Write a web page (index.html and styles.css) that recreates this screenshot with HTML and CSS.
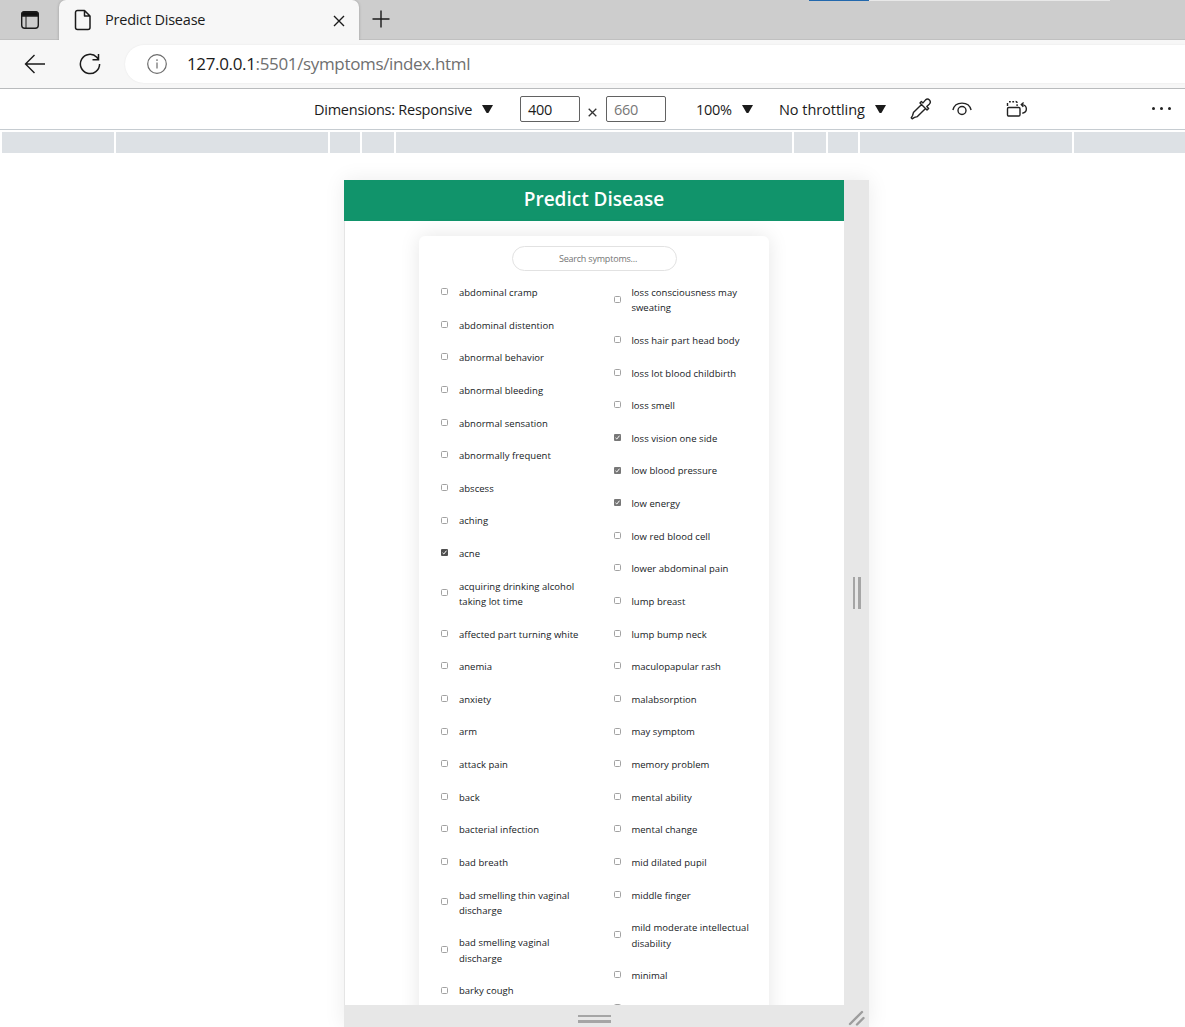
FILE: index.html
```html
<!DOCTYPE html>
<html lang="en">
<head>
<meta charset="utf-8">
<title>Predict Disease</title>
<link rel="stylesheet" href="styles.css">
</head>
<body>
<header class="tabs">
  <svg class="tabs-menu" width="20" height="20" viewBox="0 0 20 20" fill="none" stroke="#1b1b1b" stroke-width="1.4"><rect x="1.7" y="1.7" width="16.6" height="16.6" rx="3"/><path d="M2 3.8Q2 2 4 2h12q2 0 2 1.800V6H2z" fill="#111"/><path d="M6 6v12" stroke-width="1"/></svg>
  <div class="tab">
    <svg width="18" height="22" viewBox="0 0 18 22" fill="none" stroke="#1b1b1b" stroke-width="1.5" stroke-linejoin="round"><path d="M3.500 1.500h7l5.500 5.500v11.500a2 2 0 0 1-2 2H3.500a2 2 0 0 1-2-2v-15a2 2 0 0 1 2-2zM10.500 1.500V7H16"/></svg>
    <span class="tab-title">Predict Disease</span>
    <svg class="tab-close" width="12" height="12" viewBox="0 0 12 12" stroke="#1b1b1b" stroke-width="1.400"><path d="M1 1l10 10M11 1L1 11"/></svg>
  </div>
  <svg class="tab-new" width="18" height="18" viewBox="0 0 18 18" stroke="#1b1b1b" stroke-width="1.400"><path d="M9 .5v17M.5 9h17"/></svg>
  <div class="edge"><i class="edge-blue"></i><i class="edge-light"></i></div>
</header>
<nav class="nav">
  <svg class="back" width="22" height="20" viewBox="0 0 22 20" fill="none" stroke="#1b1b1b" stroke-width="1.400"><path d="M21 10H1.500M10.500 1L1.500 10l9 9"/></svg>
  <svg class="reload" width="22" height="22" viewBox="0 0 22 22" fill="none" stroke="#1b1b1b" stroke-width="1.500"><path d="M20.600 11A9.600 9.600 0 1 1 17.800 4.200L19.500 6.500M19.500 1v5.800h-6"/></svg>
  <div class="address">
    <svg width="20" height="20" viewBox="0 0 20 20" fill="none" stroke="#6c6c6c" stroke-width="1.200"><circle cx="10" cy="10" r="9.300"/><path d="M10 8.500v6M10 5.300v1.700"/></svg>
    <span class="url"><b>127.0.0.1</b>:5501/symptoms/index.html</span>
  </div>
</nav>
<section class="devbar">
  <span class="dimensions">Dimensions: Responsive</span><i class="caret"></i>
  <span class="size">400</span><svg class="times" width="9" height="9" viewBox="0 0 9 9" stroke="#333" stroke-width="1.300"><path d="M.7.700l7.600 7.600M8.300.700L.7 8.300"/></svg><span class="size muted">660</span>
  <span class="scale">100%</span><i class="caret"></i>
  <span class="throttle">No throttling</span><i class="caret"></i>
  <svg class="dropper" width="22" height="22" viewBox="0 0 22 22" fill="none" stroke="#222" stroke-width="1.400" stroke-linejoin="round"><path d="M11.800 6.200L3.400 14.600 2.600 17.500 1.200 19.800 2.200 20.800 4.500 19.400 7.400 18.600 15.800 10.200M10 5l7 7 1.600-1.600-1.800-1.900 2.700-2.600a2.800 2.800 0 0 0-3.900-4L13 4.900l-1.600-1.500z"/></svg>
  <svg class="eye" width="20" height="14" viewBox="0 0 20 14" fill="none" stroke="#222" stroke-width="1.400"><path d="M.9 8C3.200-1.200 16.800-1.200 19.100 8"/><circle cx="10" cy="8.500" r="4"/></svg>
  <svg class="rotate" width="22" height="18" viewBox="0 0 22 18" fill="none" stroke="#222" stroke-width="1.400"><rect x="1.500" y="7.500" width="12.500" height="8.500" rx="1.200"/><path d="M1.500 6V3M3 1.700h1.800M6.300 1.700h1.800M9.600 1.500q1.500 0 1.500 1.500M11.100 4.300V6"/><path d="M16.300 13.200C21.800 12.200 21.800 5.200 15.800 4.600M17.600 2.500L15.300 4.600l2 2.300"/></svg>
  <span class="more"><i></i><i></i><i></i></span>
</section>
<div class="ruler"><i></i><i></i><i></i><i></i><i></i><i></i><i></i><i></i><i></i></div>
<main class="stage">
  <div class="device">
    <div class="screen">
      <h1 class="title">Predict Disease</h1>
      <div class="card">
        <input class="search" type="text" placeholder="Search symptoms...">
        <div class="columns">
          <ul class="list">
            <li><i class="box"></i><span>abdominal cramp</span></li>
            <li><i class="box"></i><span>abdominal distention</span></li>
            <li><i class="box"></i><span>abnormal behavior</span></li>
            <li><i class="box"></i><span>abnormal bleeding</span></li>
            <li><i class="box"></i><span>abnormal sensation</span></li>
            <li><i class="box"></i><span>abnormally frequent</span></li>
            <li><i class="box"></i><span>abscess</span></li>
            <li><i class="box"></i><span>aching</span></li>
            <li><svg class="check dark" width="7" height="7" viewBox="0 0 7 7"><rect width="7" height="7" rx="1"/><path d="M1.500 3.800L2.800 5l2.700-3.300"/></svg><span>acne</span></li>
            <li><i class="box"></i><span>acquiring drinking alcohol<br>taking lot time</span></li>
            <li><i class="box"></i><span>affected part turning white</span></li>
            <li><i class="box"></i><span>anemia</span></li>
            <li><i class="box"></i><span>anxiety</span></li>
            <li><i class="box"></i><span>arm</span></li>
            <li><i class="box"></i><span>attack pain</span></li>
            <li><i class="box"></i><span>back</span></li>
            <li><i class="box"></i><span>bacterial infection</span></li>
            <li><i class="box"></i><span>bad breath</span></li>
            <li><i class="box"></i><span>bad smelling thin vaginal<br>discharge</span></li>
            <li><i class="box"></i><span>bad smelling vaginal<br>discharge</span></li>
            <li><i class="box"></i><span>barky cough</span></li>
          </ul>
          <ul class="list">
            <li><i class="box"></i><span>loss consciousness may<br>sweating</span></li>
            <li><i class="box"></i><span>loss hair part head body</span></li>
            <li><i class="box"></i><span>loss lot blood childbirth</span></li>
            <li><i class="box"></i><span>loss smell</span></li>
            <li><svg class="check" width="7" height="7" viewBox="0 0 7 7"><rect width="7" height="7" rx="1"/><path d="M1.500 3.800L2.800 5l2.700-3.300"/></svg><span>loss vision one side</span></li>
            <li><svg class="check" width="7" height="7" viewBox="0 0 7 7"><rect width="7" height="7" rx="1"/><path d="M1.500 3.800L2.800 5l2.700-3.300"/></svg><span>low blood pressure</span></li>
            <li><svg class="check" width="7" height="7" viewBox="0 0 7 7"><rect width="7" height="7" rx="1"/><path d="M1.500 3.800L2.800 5l2.700-3.300"/></svg><span>low energy</span></li>
            <li><i class="box"></i><span>low red blood cell</span></li>
            <li><i class="box"></i><span>lower abdominal pain</span></li>
            <li><i class="box"></i><span>lump breast</span></li>
            <li><i class="box"></i><span>lump bump neck</span></li>
            <li><i class="box"></i><span>maculopapular rash</span></li>
            <li><i class="box"></i><span>malabsorption</span></li>
            <li><i class="box"></i><span>may symptom</span></li>
            <li><i class="box"></i><span>memory problem</span></li>
            <li><i class="box"></i><span>mental ability</span></li>
            <li><i class="box"></i><span>mental change</span></li>
            <li><i class="box"></i><span>mid dilated pupil</span></li>
            <li><i class="box"></i><span>middle finger</span></li>
            <li><i class="box"></i><span>mild moderate intellectual<br>disability</span></li>
            <li><i class="box"></i><span>minimal</span></li>
            <li><i class="box"></i><span></span></li>
          </ul>
        </div>
      </div>
    </div>
    <div class="grip-right"><i></i><i></i></div>
    <div class="grip-bottom"><div class="bars"><i></i><i></i></div></div>
    <div class="grip-corner"><svg width="18" height="16" viewBox="0 0 18 16" stroke="#9d9d9d" stroke-width="2.400" stroke-linecap="round"><path d="M2 14L14 2M9 14.500L15.500 8"/></svg></div>
  </div>
</main>
</body>
</html>
```

FILE: styles.css
```css
* { box-sizing: border-box; }
body {
  margin: 0;
  height: 1027px;
  overflow: hidden;
  background: #fff;
  color: #1b1b1b;
  font-family: "Open Sans", "Noto Sans", sans-serif;
  display: flex;
  flex-direction: column;
}
svg, i { display: block; flex: none; }
.tabs {
  position: relative;
  height: 40px;
  flex: none;
  display: flex;
  background: #cdcdcd;
  border-bottom: 1px solid #c0c0c0;
}
.tabs-menu { margin: 10px 19px 0 20px; }
.tab {
  width: 300px;
  height: 40px;
  padding-left: 15px;
  display: flex;
  align-items: center;
  background: #f7f7f7;
  border-radius: 7px 7px 0 0;
  box-shadow: 0 0 3px rgba(0, 0, 0, .25);
}
.tab-title { margin: -2px 0 0 13px; font-size: 14.5px; letter-spacing: -.22px; white-space: nowrap; }
.tab-close { margin-left: auto; margin-right: 14px; margin-top: 1px; }
.tab-new { margin: 10px 0 0 13px; }
.edge { position: absolute; left: 809px; top: 0; display: flex; }
.edge i { height: 1px; }
.edge-blue { width: 60px; background: #2268ad; }
.edge-light { width: 241px; background: #e8e8e8; }
.nav {
  position: relative;
  height: 49px;
  flex: none;
  display: flex;
  align-items: center;
  background: #f7f7f7;
  border-bottom: 1px solid #b9bbbd;
}
.back { margin-left: 24px; }
.reload { margin-left: 33px; }
.address {
  flex: 1;
  height: 38px;
  margin-left: 24px;
  padding-left: 22px;
  display: flex;
  align-items: center;
  background: #fff;
  border-radius: 19px 0 0 19px;
  box-shadow: 0 0 2px rgba(0, 0, 0, .08);
}
.url { margin: -2px 0 0 20px; color: #6f6f6f; font-size: 17px; letter-spacing: -.35px; white-space: nowrap; }
.url b { color: #1b1b1b; font-weight: 400; }
.devbar {
  height: 41px;
  flex: none;
  display: flex;
  align-items: center;
  border-bottom: 1px solid #c6ccd1;
  font-size: 14.5px;
  letter-spacing: -.25px;
  white-space: nowrap;
}
.dimensions { width: 168px; margin-left: 314px; }
.caret { width: 11px; height: 8px; background: #1b1b1b; clip-path: polygon(0 0, 100% 0, 58% 100%, 42% 100%); }
.size { width: 60px; height: 26px; border: 1px solid #626262; border-radius: 2px; padding-left: 7px; line-height: 26px; }
.caret + .size { margin-left: 27px; }
.muted { color: #777; }
.times { margin: 7px 9px 0 8px; }
.scale { width: 46px; margin-left: 30px; }
.throttle { width: 96px; margin-left: 26px; letter-spacing: -.05px; }
.dropper { margin-left: 24px; }
.eye { margin-left: 20px; }
.rotate { margin-left: 34px; }
.more { margin: 0 14px 2px auto; display: flex; gap: 5px; }
.more i { width: 3px; height: 3px; border-radius: 50%; background: #222; }
.ruler {
  height: 23px;
  flex: none;
  padding: 2px 0 0 2px;
  display: grid;
  grid-template-columns: 112px 212px 30px 32px 396px 32px 30px 212px 111px;
  column-gap: 2px;
}
.ruler i { background: #dde1e5; }
.stage { flex: 1; padding: 27px 0 0 344px; }
.device {
  width: 525px;
  height: 847px;
  display: grid;
  grid-template-columns: 500px 25px;
  grid-template-rows: 825px 22px;
  background: #e7e7e7;
  box-shadow: 0 0 20px rgba(0, 0, 0, .08);
}
.screen { overflow: hidden; background: linear-gradient(90deg, #e5e5e5 1px, #fff 1px); }
.title {
  height: 41px;
  margin: 0 0 15px;
  background: #11946b;
  color: #fff;
  font-size: 19px;
  font-weight: 600;
  line-height: 39px;
  text-align: center;
}
.card {
  width: 350px;
  height: 900px;
  margin-left: 75px;
  padding-top: 10px;
  background: #fff;
  border-radius: 6px;
  box-shadow: 0 0 20px rgba(0, 0, 0, .1);
}
.search {
  display: block;
  width: 165px;
  height: 25px;
  margin: 0 0 0 92.500px;
  padding: 0 0 0 8px;
  border: 1px solid #e2e2e2;
  border-radius: 13px;
  font: 9px "Open Sans", sans-serif;
  letter-spacing: -.2px;
  text-align: center;
}
.search::placeholder { color: #757575; }
.columns { display: grid; grid-template-columns: 172.500px 172.500px; padding: 5.400px 0 0 22.400px; }
.list { list-style: none; margin: 0; padding: 0; font-size: 9.5px; letter-spacing: .04px; line-height: 15.3px; color: #16191d; white-space: nowrap; }
.list li { display: flex; align-items: center; gap: 10.500px; padding: 8.670px 0; min-height: 32.640px; }
.box, .check { width: 7px; height: 7px; margin-top: -2px; }
.box { border: 1px solid #a2a2a2; border-radius: 1.500px; }
.check rect { fill: #777; }
.check path { fill: none; stroke: #fff; stroke-width: 1; }
.dark rect { fill: #505050; }
.grip-right { display: flex; gap: 3px; align-items: center; justify-content: center; }
.grip-right i { width: 2.500px; height: 32px; background: #a5a5a5; }
.grip-bottom { display: grid; place-items: center; padding-top: 5px; }
.bars { display: grid; gap: 3px; }
.bars i { width: 33px; height: 2.500px; background: #a5a5a5; }
.grip-corner { display: grid; place-items: center; padding-top: 3px; }
```
